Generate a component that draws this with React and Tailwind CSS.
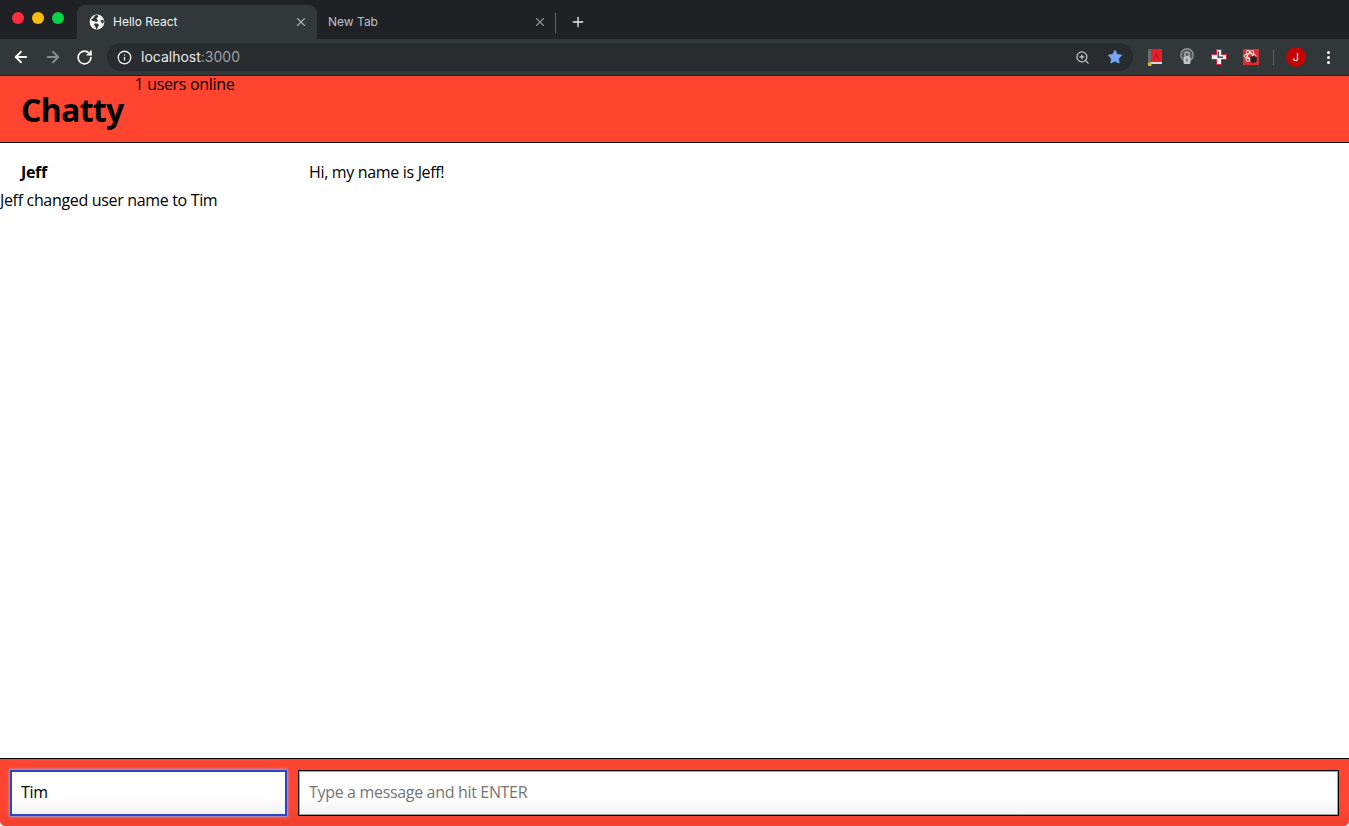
import React from "react";
import { ArrowLeft, ArrowRight, RotateCw, Info, X, Plus, ZoomIn, Star } from "lucide-react";

const sans = "font-['Open_Sans',sans-serif]";
const ui = "font-['Inter','Liberation_Sans',sans-serif] tracking-normal";

function Globe() {
  return (
    <svg width="16" height="16" viewBox="0 0 16 16" className="shrink-0">
      <circle cx="8" cy="8" r="7.4" fill="#fff" />
      <path d="M2 5.6 4.4 4l1.4-2.4 2.8-.5.8 1.6-2 1.8 1.6 2L7.6 8 5 7.2 3.4 7zM6 9.2l3 .6 1 1.6-1.2 1.6-.6 1.8-1 .2-.8-2.6L5 10.8z M11.5 6.5l2.8-.9.6 2.3-1.2 1.8-1.6-1.4z" fill="#32373a" />
    </svg>
  );
}

function BookIcon() {
  return (
    <svg width="16" height="17" viewBox="-1 0 16 17">
      <rect x="0" y="0" width="3" height="14" fill="#6a6e70" />
      <rect x="3" y="0" width="11" height="13" fill="#e5202a" />
      <path d="M8.2 2.2 5 10.8h1.6l.6-1.7h2.4l.6 1.7h1.4z" fill="#c81a22" />
      <rect x="3" y="13" width="11" height="2" fill="#d8d8d8" />
      <rect x="0" y="13.5" width="3.4" height="3.5" fill="#e8b820" />
    </svg>
  );
}

function BulbIcon() {
  return (
    <svg width="16" height="18" viewBox="-1 0 16 18">
      <circle cx="7" cy="7" r="6.2" fill="#55595c" stroke="#8d9194" strokeWidth="1.4" />
      <circle cx="7" cy="6.4" r="2.3" fill="none" stroke="#bbbdbe" strokeWidth="1.2" />
      <rect x="3.6" y="8.4" width="6.8" height="7.6" rx="1" fill="#c4c5c6" />
      <rect x="6.3" y="10.6" width="1.4" height="3" fill="#5e6366" />
    </svg>
  );
}

function CrossIcon() {
  return (
    <svg width="16" height="16" viewBox="0 0 16 16">
      <path d="M5.5.5h5v5h5v5h-5v5h-5v-5h-5v-5h5z" fill="#f2f2f2" stroke="#d3213f" strokeWidth="1" />
      <path d="M6.5 2.5h1.6v5h4v1.6H6.5z" fill="#4a4f52" />
    </svg>
  );
}

function AtomIcon() {
  return (
    <svg width="16" height="16" viewBox="0 0 16 16">
      <rect width="16" height="16" fill="#e12a2a" />
      <g fill="none" stroke="#fff" strokeWidth="0.9">
        <ellipse cx="7" cy="7" rx="6" ry="2.4" />
        <ellipse cx="7" cy="7" rx="6" ry="2.4" transform="rotate(60 7 7)" />
        <ellipse cx="7" cy="7" rx="6" ry="2.4" transform="rotate(120 7 7)" />
      </g>
      <circle cx="10.5" cy="10.5" r="3.4" fill="#2a2222" />
    </svg>
  );
}

function TabStrip() {
  return (
    <div className={`flex h-[39px] bg-[#202124] ${ui}`}>
      <div className="flex w-[77px] shrink-0 items-center gap-[8px] pb-[4px] pl-[12px]">
        <span className="h-[12px] w-[12px] rounded-full bg-[#fc2d3e]" />
        <span className="h-[12px] w-[12px] rounded-full bg-[#fdbc07]" />
        <span className="h-[12px] w-[12px] rounded-full bg-[#08d348]" />
      </div>
      <div className="mt-[5px] flex w-[240px] items-center rounded-t-[8px] bg-[#32373a] pl-[12px] pr-[9px]">
        <Globe />
        <span className="ml-[8px] flex-1 text-[12px] text-[#f1f3f4]">Hello React</span>
        <X size={14} strokeWidth={2} className="text-[#a9adb0]" />
      </div>
      <div className="mt-[5px] flex w-[238px] items-center pl-[11px] pr-[8px]">
        <span className="flex-1 text-[12px] text-[#bdc1c6]">New Tab</span>
        <X size={14} strokeWidth={2} className="text-[#8a8e92]" />
      </div>
      <div className="mt-[13px] h-[20px] w-px bg-[#5f6368]" />
      <div className="mt-[5px] flex items-center pl-[14px]">
        <Plus size={16} strokeWidth={2} className="text-[#e8eaed]" />
      </div>
    </div>
  );
}

function Toolbar() {
  return (
    <div className={`flex h-[37px] items-center border-b border-[#1f2123] bg-[#32373a] ${ui}`}>
      <div className="flex w-[107px] shrink-0 items-center gap-[14px] pl-[12px]">
        <ArrowLeft size={18} strokeWidth={2.4} className="text-white" />
        <ArrowRight size={18} strokeWidth={2.4} className="text-[#8a8d90]" />
        <RotateCw size={17} strokeWidth={2.4} className="text-white" />
      </div>
      <div className="flex h-[28px] w-[1026px] items-center rounded-full bg-[#282c2f] pl-[10px] pr-[10px]">
        <Info size={15} strokeWidth={2.2} className="text-[#e8eaed]" />
        <span className="ml-[9px] flex-1 text-[14px] text-[#e8eaed]">
          localhost<span className="text-[#9aa0a6]">:3000</span>
        </span>
        <ZoomIn size={15} strokeWidth={2} className="text-[#c4c7ca]" />
        <Star size={16} fill="#76a7fa" strokeWidth={1} className="ml-[17px] text-[#76a7fa]" />
      </div>
      <div className="ml-[14px] flex items-center gap-[16px]">
        <BookIcon />
        <BulbIcon />
        <CrossIcon />
        <AtomIcon />
      </div>
      <div className="ml-[14px] h-[15px] w-px bg-[#5f6368]" />
      <div className="ml-[12px] flex h-[20px] w-[20px] items-center justify-center rounded-full bg-[#c40000] text-[11px] text-white">J</div>
      <div className="ml-[21px] flex flex-col gap-[2px]">
        <span className="h-[3px] w-[3px] rounded-full bg-white" />
        <span className="h-[3px] w-[3px] rounded-full bg-white" />
        <span className="h-[3px] w-[3px] rounded-full bg-white" />
      </div>
    </div>
  );
}

export default function App() {
  return (
    <div className={`flex h-[826px] flex-col overflow-hidden bg-white text-[16px] leading-[18px] tracking-[-0.33px] text-black ${sans}`}>
      <TabStrip />
      <Toolbar />
      <nav className="flex h-[67px] shrink-0 items-start border-b border-black bg-[#ff4530] pl-[21px]">
        <h1 className="mt-[15px] text-[32px] font-bold leading-[38px] tracking-[-0.7px]">Chatty</h1>
        <span className="ml-[11px] leading-[16px]">1 users online</span>
      </nav>
      <main className="flex-1 pt-[14px]">
        <div className="flex h-[30px] items-center">
          <span className="w-[309px] pl-[21px] font-bold">Jeff</span>
          <span>Hi, my name is Jeff!</span>
        </div>
        <div className="flex h-[26px] items-center">Jeff changed user name to Tim</div>
      </main>
      <footer className="flex h-[68px] shrink-0 items-center gap-[11px] rounded-b-[5px] border-t border-black bg-gradient-to-b from-[#ff4530] from-70% to-[#f0402f] px-[10px]">
        <input
          readOnly
          value="Tim"
          className="h-[46px] w-[277px] border-2 border-[#2a45c8] bg-gradient-to-b from-white from-60% to-[#f3f3f3] px-[9px] pb-[1px] text-[16px] tracking-[-0.33px] text-black shadow-[0_0_2px_1px_#8ea4e8] outline-none"
        />
        <input
          readOnly
          placeholder="Type a message and hit ENTER"
          className="h-[46px] flex-1 border-[1.5px] border-black bg-gradient-to-b from-white from-60% to-[#f3f3f3] px-[10px] pb-[1px] text-[16px] tracking-[-0.33px] shadow-[inset_0_0_0_1px_rgba(0,0,0,0.35)] outline-none placeholder:text-[#757575]"
        />
      </footer>
    </div>
  );
}
